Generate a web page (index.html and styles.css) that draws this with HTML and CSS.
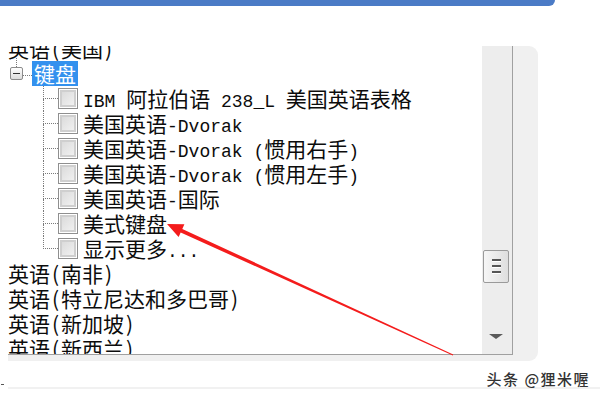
FILE: index.html
```html
<!DOCTYPE html>
<html lang="zh-CN">
<head>
    <meta charset="UTF-8">
    <meta name="viewport" content="width=device-width, initial-scale=1.0">
    <link rel="stylesheet" href="styles.css">
    <title>键盘布局</title>
</head>
<body>
    <div class="topbar"></div>

    <div class="panel">
        <div class="listbox">
            <div class="tree">
                <div class="row plain">英语<span class="paren">(</span>美国<span class="paren">)</span></div>

                <div class="row group">
                    <div class="expander">
                        <span class="stem"></span>
                        <span class="toggle"><span class="minus"></span></span>
                        <span class="stem-low"></span>
                    </div>
                    <span class="hline"></span>
                    <span class="selected">键盘</span>
                </div>

                <div class="row child">
                    <span class="branch"><span class="up"></span><span class="down"></span></span>
                    <span class="check"></span>
                    <span class="label"><span class="lat">IBM </span>阿拉伯语<span class="lat"> 238_L </span>美国英语表格</span>
                </div>
                <div class="row child">
                    <span class="branch"><span class="up"></span><span class="down"></span></span>
                    <span class="check"></span>
                    <span class="label">美国英语<span class="lat">-Dvorak</span></span>
                </div>
                <div class="row child">
                    <span class="branch"><span class="up"></span><span class="down"></span></span>
                    <span class="check"></span>
                    <span class="label">美国英语<span class="lat">-Dvorak (</span>惯用右手<span class="lat">)</span></span>
                </div>
                <div class="row child">
                    <span class="branch"><span class="up"></span><span class="down"></span></span>
                    <span class="check"></span>
                    <span class="label">美国英语<span class="lat">-Dvorak (</span>惯用左手<span class="lat">)</span></span>
                </div>
                <div class="row child">
                    <span class="branch"><span class="up"></span><span class="down"></span></span>
                    <span class="check"></span>
                    <span class="label">美国英语<span class="lat">-</span>国际</span>
                </div>
                <div class="row child">
                    <span class="branch"><span class="up"></span><span class="down"></span></span>
                    <span class="check"></span>
                    <span class="label">美式键盘</span>
                </div>
                <div class="row child last">
                    <span class="branch"><span class="up"></span><span class="down"></span></span>
                    <span class="check"></span>
                    <span class="label">显示更多<span class="lat">...</span></span>
                </div>

                <div class="row plain">英语<span class="paren">(</span>南非<span class="paren">)</span></div>
                <div class="row plain">英语<span class="paren">(</span>特立尼达和多巴哥<span class="paren">)</span></div>
                <div class="row plain">英语<span class="paren">(</span>新加坡<span class="paren">)</span></div>
                <div class="row plain">英语<span class="paren">(</span>新西兰<span class="paren">)</span></div>
            </div>

            <div class="scrollbar">
                <div class="thumb">
                    <span class="grip"></span>
                    <span class="grip"></span>
                    <span class="grip"></span>
                </div>
                <div class="arrow-down"></div>
            </div>
        </div>
    </div>

    <div class="footer">
        <span class="mark"></span>
        <span class="watermark">头条 @狸米喔</span>
    </div>
    <div class="rule"></div>

    <!-- red annotation arrow drawn over the list -->
    <svg class="annotation" width="600" height="400" viewBox="0 0 600 400">
        <polygon fill="#f41c1c"
            points="453.2,354.6 182.3,228.9 184.4,224.3 167,224 178.6,237.1 180.7,232.5 452.8,355.4"/>
    </svg>
</body>
</html>
```

FILE: styles.css
```css
body {
    margin: 0;
    padding: 0;
    width: 600px;
    height: 400px;
    overflow: hidden;
    background-color: #fff;
    font-family: "Noto Sans CJK SC", sans-serif;
    color: #0c0c0c;
    position: relative;
}

.topbar {
    width: 555px;
    height: 6px;
    background-color: #4b7bc6;
    border-bottom-right-radius: 8px;
}

.panel {
    margin: 40px 0 0 8px;
    width: 530px;
    height: 315px;
    background-color: #f0f0f0;
    border-radius: 0 9px 9px 0;
}

.listbox {
    display: flex;
    width: 504px;
    height: 308px;
    background-color: #fff;
    border-right: 1px solid #a0a0a0;
    border-bottom: 1px solid #a0a0a0;
}

.tree {
    flex: 1;
    overflow: hidden;
}

.row:first-child {
    margin-top: -10px;
}

.row {
    display: flex;
    align-items: stretch;
    height: 25px;
    line-height: 25px;
    font-size: 21px;
    white-space: nowrap;
}

.paren {
    padding: 0 2px;
}

.lat {
    font-family: "Liberation Mono", monospace;
    font-size: 18px;
}

/* expanded group node */
.expander {
    display: flex;
    flex-direction: column;
    align-items: center;
    width: 13px;
    margin-left: 2px;
}

.stem {
    width: 0;
    height: 9px;
    margin-top: -3px;
    border-left: 1px dotted #7a7a7a;
}

.stem-low {
    flex: 1;
}

.toggle {
    display: flex;
    align-items: center;
    justify-content: center;
    width: 11px;
    height: 11px;
    border: 1px solid #8c8c8c;
    border-radius: 2px;
    background: linear-gradient(#ffffff, #dcdcdc);
}

.minus {
    width: 7px;
    height: 1px;
    background-color: #333;
}

.hline {
    align-self: center;
    width: 9px;
    margin-top: 4px;
    border-top: 1px dotted #7a7a7a;
}

.selected {
    padding: 0 2px;
    background-color: #3391ee;
    color: #fff;
}

/* children of the group */
.child {
    padding-left: 35px;
}

.branch {
    display: flex;
    flex-direction: column;
    width: 15px;
}

.branch .up {
    height: 12px;
    border-left: 1px dotted #7a7a7a;
    border-bottom: 1px dotted #7a7a7a;
}

.branch .down {
    flex: 1;
    border-left: 1px dotted #7a7a7a;
}

.last .branch .down {
    border-left: none;
}

.check {
    align-self: center;
    box-sizing: border-box;
    width: 20px;
    height: 21px;
    border: 1px solid #8f8f8f;
    background: linear-gradient(135deg, #d6d6d6, #f6f6f6);
    box-shadow: inset 0 0 0 1px #fff, inset 0 0 0 3px #cfcfcf;
    margin-right: 5px;
}

/* scrollbar */
.scrollbar {
    display: flex;
    flex-direction: column;
    width: 30px;
    background-color: #ededed;
}

.thumb {
    display: flex;
    flex-direction: column;
    align-items: center;
    justify-content: center;
    gap: 3px;
    box-sizing: border-box;
    width: 26px;
    height: 33px;
    margin: 204px 0 0 1px;
    border: 1px solid #9a9a9a;
    border-radius: 2px;
    background: linear-gradient(90deg, #f6f6f6, #dedede);
}

.grip {
    width: 9px;
    height: 2px;
    background-color: #555;
    border-bottom: 1px solid #fff;
}

.arrow-down {
    width: 0;
    height: 0;
    margin: 51px 0 0 7px;
    border-left: 7px solid transparent;
    border-right: 7px solid transparent;
    border-top: 5px solid #5a5a5a;
}

/* footer */
.footer {
    display: flex;
    justify-content: space-between;
    align-items: flex-end;
    height: 26px;
    padding: 0 10px 0 1px;
}

.mark {
    width: 3px;
    height: 1px;
    margin-bottom: 2px;
    background-color: #555;
}

.watermark {
    font-size: 15px;
    font-weight: 500;
    line-height: 16px;
    letter-spacing: 1.5px;
    color: #333;
    text-shadow: 0 0 1px #fff;
}

.rule {
    height: 2px;
    margin-left: 8px;
    background-color: #f1f1f1;
}

.annotation {
    position: absolute;
    left: 0;
    top: 0;
    pointer-events: none;
}
```
